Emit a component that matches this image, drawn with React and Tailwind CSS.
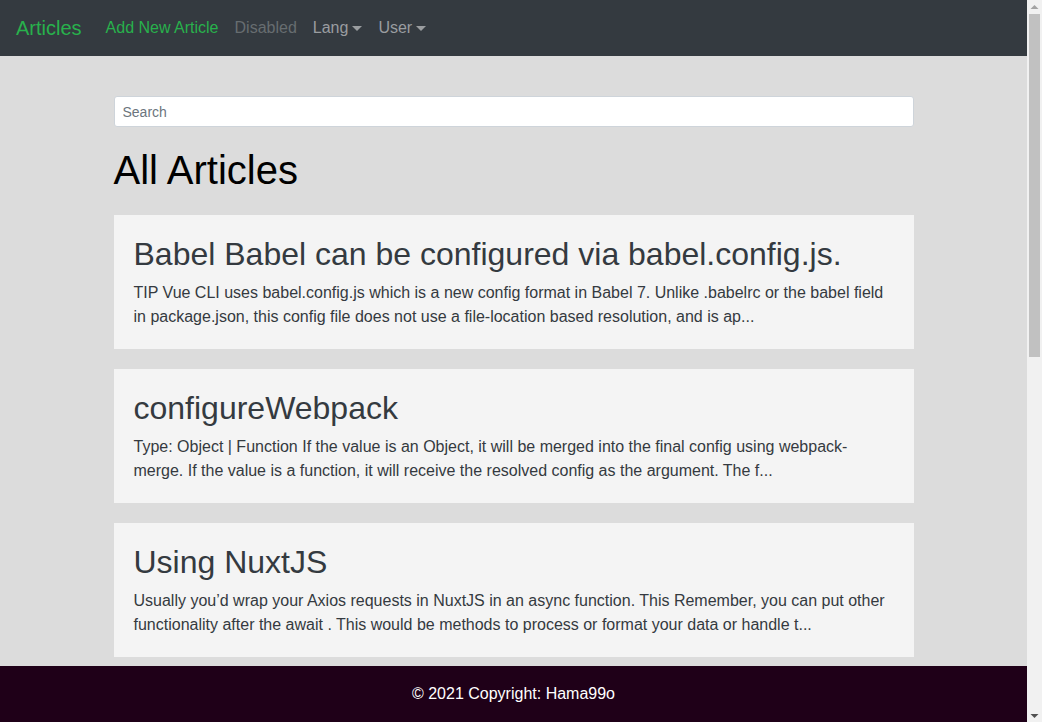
import React from "react";

const articles = [
  {
    title: "Babel Babel can be configured via babel.config.js.",
    body: "TIP Vue CLI uses babel.config.js which is a new config format in Babel 7. Unlike .babelrc or the babel field in package.json, this config file does not use a file-location based resolution, and is ap...",
  },
  {
    title: "configureWebpack",
    body: "Type: Object | Function If the value is an Object, it will be merged into the final config using webpack-merge. If the value is a function, it will receive the resolved config as the argument. The f...",
  },
  {
    title: "Using NuxtJS",
    body: "Usually you\u2019d wrap your Axios requests in NuxtJS in an async function. This Remember, you can put other functionality after the await . This would be methods to process or format your data or handle t...",
  },
];

function Caret() {
  return (
    <span className="ml-[4px] inline-block w-0 h-0 border-t-[5px] border-t-current border-x-[5px] border-x-transparent" />
  );
}

function Scrollbar() {
  return (
    <div className="w-[15px] h-full bg-[#f1f1f1] flex flex-col items-center">
      <svg width="15" height="14" viewBox="0 0 15 14" className="shrink-0">
        <polygon points="3.5,9 7.5,5 11.5,9" fill="#a3a3a3" />
      </svg>
      <div className="w-[11px] h-[343px] bg-[#c1c1c1]" />
      <div className="flex-1" />
      <svg width="15" height="14" viewBox="0 0 15 14" className="shrink-0">
        <polygon points="3.5,6 11.5,6 7.5,10" fill="#505050" />
      </svg>
    </div>
  );
}

export default function App() {
  return (
    <div
      className="h-[722px] w-full flex overflow-hidden bg-[#dcdcdc]"
      style={{ fontFamily: '"Liberation Sans", Arial, sans-serif' }}
    >
      <div className="flex-1 min-w-0 flex flex-col h-full">
        <nav className="h-[56px] shrink-0 bg-[#343a40] flex items-center px-4">
          <span className="text-[20px] leading-[30px] text-[#28b14c] mr-4">Articles</span>
          <span className="px-2 text-[16px] leading-[24px] text-[#28b14c]">Add New Article</span>
          <span className="px-2 text-[16px] leading-[24px] text-[#676d70]">Disabled</span>
          <span className="px-2 text-[16px] leading-[24px] text-[#9a9da0] flex items-center">
            Lang
            <Caret />
          </span>
          <span className="px-2 text-[16px] leading-[24px] text-[#9a9da0] flex items-center">
            User
            <Caret />
          </span>
        </nav>

        <div className="flex-1 min-h-0 overflow-hidden">
          <main className="w-[800px] mx-auto pt-[40px]">
            <input
              type="text"
              placeholder="Search"
              className="block w-full h-[31px] px-2 bg-white border border-[#ced4da] rounded-[3px] text-[14px] text-[#495057] placeholder:text-[#6c757d] outline-none"
            />
            <h1 className="mt-[19px] mb-[21px] text-[40px] leading-[48px] text-black">All Articles</h1>
            {articles.map((a, i) => (
              <div key={i} className="bg-[#f4f4f4] p-5 mb-5 text-[#343a40]">
                <h2 className="text-[32px] leading-[38px] mb-2">{a.title}</h2>
                <p className="text-[16px] leading-[24px]">{a.body}</p>
              </div>
            ))}
          </main>
        </div>

        <footer className="h-[56px] shrink-0 bg-[#1f0018] flex items-center justify-center text-[16px] text-white">
          © 2021 Copyright: Hama99o
        </footer>
      </div>
      <Scrollbar />
    </div>
  );
}
